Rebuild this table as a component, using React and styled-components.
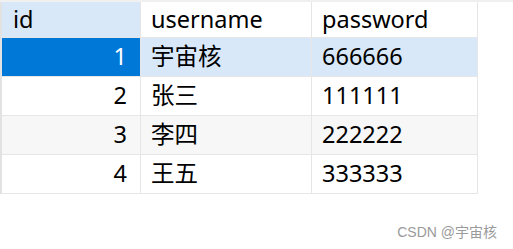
import React from "react";
import styled, { createGlobalStyle } from "styled-components";

const rows = [
  { id: 1, username: "宇宙核", password: "666666" },
  { id: 2, username: "张三", password: "111111" },
  { id: 3, username: "李四", password: "222222" },
  { id: 4, username: "王五", password: "333333" },
];

export default function App() {
  return (
    <>
      <GlobalStyle />
      <Page>
        <TopStrip />
        <Table>
          <Cell $header $first>id</Cell>
          <Cell>username</Cell>
          <Cell>password</Cell>
          {rows.map((r, i) => (
            <React.Fragment key={r.id}>
              <Cell $num $selected={i === 0} $alt={i === 2}>
                {r.id}
              </Cell>
              <Cell $current={i === 0} $alt={i === 2}>
                {r.username}
              </Cell>
              <Cell $current={i === 0} $alt={i === 2}>
                {r.password}
              </Cell>
            </React.Fragment>
          ))}
        </Table>
        <Watermark>CSDN @宇宙核</Watermark>
      </Page>
    </>
  );
}

const GlobalStyle = createGlobalStyle`
  html, body {
    margin: 0;
    padding: 0;
    background: #ffffff;
  }
  body {
    font-family: "Noto Sans", "Noto Sans CJK SC", sans-serif;
    color: #000;
  }
`;

const Page = styled.div`
  position: relative;
  width: 513px;
  height: 249px;
  overflow: hidden;
  background: #fff;
`;

const TopStrip = styled.div`
  height: 2px;
  background: #f0f0f0;
`;

const Table = styled.div`
  display: grid;
  grid-template-columns: 139px 171px 166px;
  grid-template-rows: 36px repeat(4, 39px);
  width: 478px;
  box-sizing: border-box;
  border-left: 2px solid #e2e2e2;
`;

const Cell = styled.div`
  box-sizing: border-box;
  display: flex;
  align-items: center;
  justify-content: ${(p) => (p.$num ? "flex-end" : "flex-start")};
  padding: ${(p) => (p.$num ? "0 13px 0 0" : p.$first ? "0 0 0 11px" : "0 0 0 10px")};
  border-right: 1px solid #e6e6e6;
  border-bottom: 1px solid #e6e6e6;
  font-size: 23.5px;
  line-height: 1;
  color: ${(p) => (p.$selected ? "#ffffff" : "#000000")};
  background: ${(p) =>
    p.$selected
      ? "#0078d7"
      : p.$current || p.$header
      ? "#d9e8f8"
      : p.$alt
      ? "#f7f7f7"
      : "#ffffff"};
`;

const Watermark = styled.div`
  position: absolute;
  right: 16px;
  bottom: 8px;
  font-size: 14px;
  color: #9a9a9a;
  font-family: "Liberation Sans", "Noto Sans CJK SC", sans-serif;
`;
